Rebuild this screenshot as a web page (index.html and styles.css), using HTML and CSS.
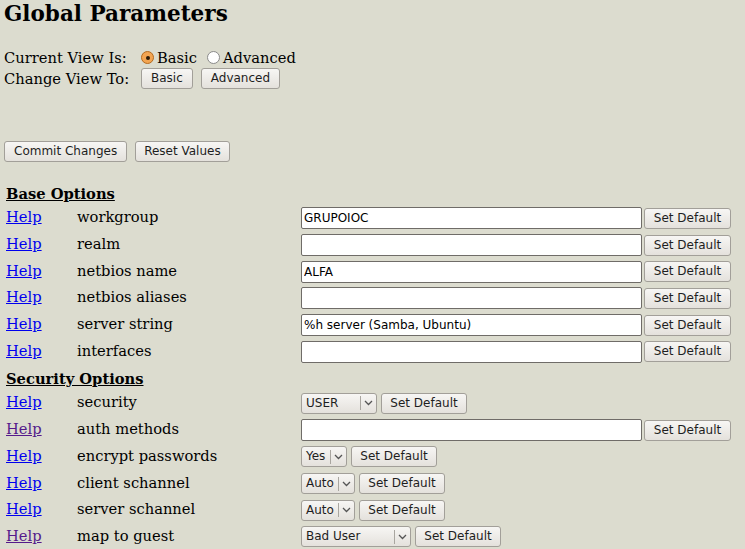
FILE: index.html
```html
<!DOCTYPE html>
<html>
<head>
<meta charset="utf-8">
<title>Global Parameters</title>
<link rel="stylesheet" href="styles.css">
</head>
<body>
<h1 class="title">Global Parameters</h1>

<div class="view">
  <div class="view-label">Current View Is:</div>
  <div class="view-ctl">
    <span class="radio checked"></span><span class="radio-text">Basic</span>
    <span class="radio"></span><span class="radio-text">Advanced</span>
  </div>
  <div class="view-label">Change View To:</div>
  <div class="view-ctl">
    <button class="btn">Basic</button>
    <button class="btn">Advanced</button>
  </div>
</div>

<div class="actions">
  <button class="btn">Commit Changes</button>
  <button class="btn reset">Reset Values</button>
</div>

<div class="section-title base">Base Options</div>
<div class="params">
  <a class="help" href="#">Help</a><span class="name">workgroup</span>
  <div class="ctl"><input class="text" value="GRUPOIOC"><button class="btn sd">Set Default</button></div>
  <a class="help" href="#">Help</a><span class="name">realm</span>
  <div class="ctl"><input class="text" value=""><button class="btn sd">Set Default</button></div>
  <a class="help" href="#">Help</a><span class="name">netbios name</span>
  <div class="ctl"><input class="text" value="ALFA"><button class="btn sd">Set Default</button></div>
  <a class="help" href="#">Help</a><span class="name">netbios aliases</span>
  <div class="ctl"><input class="text" value=""><button class="btn sd">Set Default</button></div>
  <a class="help" href="#">Help</a><span class="name">server string</span>
  <div class="ctl"><input class="text" value="%h server (Samba, Ubuntu)"><button class="btn sd">Set Default</button></div>
  <a class="help" href="#">Help</a><span class="name">interfaces</span>
  <div class="ctl"><input class="text" value=""><button class="btn sd">Set Default</button></div>
</div>

<div class="section-title security">Security Options</div>
<div class="params">
  <a class="help" href="#">Help</a><span class="name">security</span>
  <div class="ctl"><div class="select w-user"><span class="sel-val">USER</span><span class="sel-arrow"><svg width="9" height="6" viewBox="0 0 9 6"><path d="M1 1 L4.5 4.5 L8 1" fill="none" stroke="#555" stroke-width="1.3"/></svg></span></div><button class="btn sd">Set Default</button></div>
  <a class="help visited" href="#">Help</a><span class="name">auth methods</span>
  <div class="ctl"><input class="text" value=""><button class="btn sd">Set Default</button></div>
  <a class="help" href="#">Help</a><span class="name">encrypt passwords</span>
  <div class="ctl"><div class="select w-yes"><span class="sel-val">Yes</span><span class="sel-arrow"><svg width="9" height="6" viewBox="0 0 9 6"><path d="M1 1 L4.5 4.5 L8 1" fill="none" stroke="#555" stroke-width="1.3"/></svg></span></div><button class="btn sd">Set Default</button></div>
  <a class="help" href="#">Help</a><span class="name">client schannel</span>
  <div class="ctl"><div class="select w-auto"><span class="sel-val">Auto</span><span class="sel-arrow"><svg width="9" height="6" viewBox="0 0 9 6"><path d="M1 1 L4.5 4.5 L8 1" fill="none" stroke="#555" stroke-width="1.3"/></svg></span></div><button class="btn sd">Set Default</button></div>
  <a class="help" href="#">Help</a><span class="name">server schannel</span>
  <div class="ctl"><div class="select w-auto"><span class="sel-val">Auto</span><span class="sel-arrow"><svg width="9" height="6" viewBox="0 0 9 6"><path d="M1 1 L4.5 4.5 L8 1" fill="none" stroke="#555" stroke-width="1.3"/></svg></span></div><button class="btn sd">Set Default</button></div>
  <a class="help visited" href="#">Help</a><span class="name">map to guest</span>
  <div class="ctl"><div class="select w-bad"><span class="sel-val">Bad User</span><span class="sel-arrow"><svg width="9" height="6" viewBox="0 0 9 6"><path d="M1 1 L4.5 4.5 L8 1" fill="none" stroke="#555" stroke-width="1.3"/></svg></span></div><button class="btn sd">Set Default</button></div>
</div>
</body>
</html>
```

FILE: styles.css
```css
html, body {
  margin: 0;
  padding: 0;
  background: #dcdccf;
}
body {
  padding: 0 4px;
  font-family: "DejaVu Serif", serif;
  font-size: 14.7px;
  color: #000;
  overflow: hidden;
}
.title {
  margin: 0;
  font-size: 21.5px;
  line-height: 28px;
  font-weight: bold;
}
.view {
  margin-top: 19px;
  display: grid;
  grid-template-columns: 137px auto;
  grid-auto-rows: 21px;
  align-items: center;
}
.view-label {
  line-height: 21px;
}
.view-ctl {
  display: flex;
  align-items: center;
}
.radio {
  width: 11px;
  height: 11px;
  border: 1px solid #8a8a8a;
  border-radius: 50%;
  background: #fff;
  position: relative;
  margin-right: 3px;
  flex: none;
}
.radio.checked {
  background: #f3a552;
  border-color: #b56a1e;
}
.radio.checked::after {
  content: "";
  position: absolute;
  left: 3.5px;
  top: 3.5px;
  width: 4px;
  height: 4px;
  border-radius: 50%;
  background: #2b1a08;
}
.radio-text {
  margin-right: 10px;
}
.view-ctl .btn {
  margin-right: 8px;
}
.btn {
  font-family: "DejaVu Sans", sans-serif;
  font-size: 12px;
  color: #1e1e1e;
  height: 21px;
  padding: 0 9px;
  border: 1px solid #a29f99;
  border-radius: 3px;
  background: linear-gradient(#f7f6f4, #e4e1dc);
  box-sizing: border-box;
  line-height: 19px;
  margin: 0;
  white-space: nowrap;
}
.btn.reset {
  padding: 0 8px;
}
.actions {
  margin-top: 52px;
  display: flex;
  gap: 8px;
}
.section-title {
  font-weight: bold;
  text-decoration: underline;
  padding-left: 2px;
  line-height: 18px;
}
.section-title.base {
  margin-top: 23px;
}
.section-title.security {
  margin-top: 5px;
}
.params {
  display: grid;
  grid-template-columns: 71px 224px auto;
  grid-auto-rows: 26.7px;
  align-items: center;
  padding-left: 2px;
  margin-top: 2px;
}
.help, .name {
  margin-bottom: 3px;
}
.help {
  color: #0000ee;
}
.help.visited {
  color: #551a8b;
}
.ctl {
  display: flex;
  align-items: center;
  gap: 2px;
}
.text {
  width: 341px;
  height: 22px;
  box-sizing: border-box;
  border: 1px solid #6f6c68;
  border-radius: 2px;
  background: #fff;
  font-family: "DejaVu Sans", sans-serif;
  font-size: 12px;
  color: #000;
  padding: 0 2px;
  margin: 0;
}
.sd {
  width: 87px;
  padding: 0;
  text-align: center;
}
.select + .sd {
  width: 86px;
}
.select {
  display: flex;
  align-items: center;
  height: 21px;
  box-sizing: border-box;
  border: 1px solid #a29f99;
  border-radius: 3px;
  background: linear-gradient(#f7f6f4, #e4e1dc);
  font-family: "DejaVu Sans", sans-serif;
  font-size: 12px;
  color: #1e1e1e;
  margin-right: 2px;
  flex: none;
}
.sel-val {
  flex: 1;
  padding-left: 4px;
  line-height: 19px;
  white-space: nowrap;
}
.sel-arrow {
  width: 15px;
  height: 14px;
  border-left: 1px solid #a9a6a0;
  display: flex;
  align-items: center;
  justify-content: center;
  flex: none;
}
.w-user { width: 76px; }
.w-yes { width: 46px; }
.w-auto { width: 54px; }
.w-bad { width: 110px; }
```
